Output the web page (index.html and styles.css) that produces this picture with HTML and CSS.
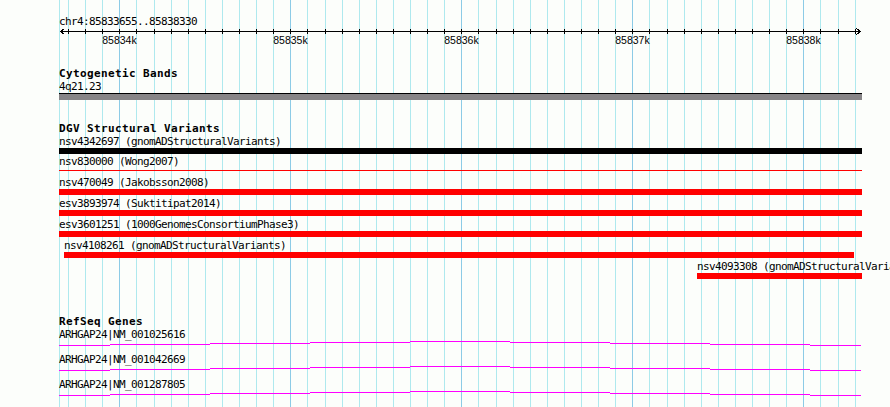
FILE: index.html
```html
<!DOCTYPE html>
<html><head><meta charset="utf-8"/>
<meta name="viewport" content="width=device-width, initial-scale=1.0"/>
<title>chr4:85833655..85838330</title>
<link rel="stylesheet" href="styles.css">
</head>
<body>

<div id="view">
<svg class="grid" width="803" height="407">
  <path class="minor" d="M0.5 0V407M9.5 0V407M26.5 0V407M43.5 0V407M77.5 0V407M95.5 0V407M112.5 0V407M129.5 0V407M146.5 0V407M163.5 0V407M180.5 0V407M197.5 0V407M214.5 0V407M248.5 0V407M266.5 0V407M283.5 0V407M300.5 0V407M317.5 0V407M334.5 0V407M351.5 0V407M368.5 0V407M385.5 0V407M419.5 0V407M437.5 0V407M454.5 0V407M471.5 0V407M488.5 0V407M505.5 0V407M522.5 0V407M539.5 0V407M556.5 0V407M590.5 0V407M608.5 0V407M625.5 0V407M642.5 0V407M659.5 0V407M676.5 0V407M693.5 0V407M710.5 0V407M727.5 0V407M761.5 0V407M779.5 0V407M796.5 0V407"/>
  <path class="major" d="M60.5 0V407M231.5 0V407M402.5 0V407M573.5 0V407M744.5 0V407"/>
</svg>

<div class="ruler">
  <div class="locus">chr4:85833655..85838330</div>
  <svg class="axis" width="803" height="20">
    <path d="M1 3.5H802M5.5 0.5L1.5 3.5L5.5 6.5M797.5 0.5L801.5 3.5L797.5 6.5"/>
    <path d="M9.5 1V6M26.5 1V6M43.5 1V6M60.5 1V6M77.5 1V6M95.5 1V6M112.5 1V6M129.5 1V6M146.5 1V6M163.5 1V6M180.5 1V6M197.5 1V6M214.5 1V6M231.5 1V6M248.5 1V6M266.5 1V6M283.5 1V6M300.5 1V6M317.5 1V6M334.5 1V6M351.5 1V6M368.5 1V6M385.5 1V6M402.5 1V6M419.5 1V6M437.5 1V6M454.5 1V6M471.5 1V6M488.5 1V6M505.5 1V6M522.5 1V6M539.5 1V6M556.5 1V6M573.5 1V6M590.5 1V6M608.5 1V6M625.5 1V6M642.5 1V6M659.5 1V6M676.5 1V6M693.5 1V6M710.5 1V6M727.5 1V6M744.5 1V6M761.5 1V6M779.5 1V6M796.5 1V6"/>
    <text x="60.5" y="16">85834k</text>
    <text x="231.5" y="16">85835k</text>
    <text x="402.5" y="16">85836k</text>
    <text x="573.5" y="16">85837k</text>
    <text x="744.5" y="16">85838k</text>
  </svg>
</div>

<div class="track cyto">
  <div class="title">Cytogenetic Bands</div>
  <div class="label">4q21.23</div>
  <div class="band"></div>
</div>

<div class="track dgv">
  <div class="title">DGV Structural Variants</div>
  <div class="feat"><div class="label">nsv4342697 (gnomADStructuralVariants)</div><div class="bar black"></div></div>
  <div class="feat"><div class="label">nsv830000 (Wong2007)</div><div class="bar thin"></div></div>
  <div class="feat"><div class="label">nsv470049 (Jakobsson2008)</div><div class="bar"></div></div>
  <div class="feat"><div class="label">esv3893974 (Suktitipat2014)</div><div class="bar"></div></div>
  <div class="feat"><div class="label">esv3601251 (1000GenomesConsortiumPhase3)</div><div class="bar"></div></div>
  <div class="feat" style="margin-left:5px"><div class="label">nsv4108261 (gnomADStructuralVariants)</div><div class="bar" style="width:790px"></div></div>
  <div class="feat" style="margin-left:638px"><div class="label">nsv4093308 (gnomADStructuralVariants)</div><div class="bar" style="width:165px"></div></div>
</div>

<div class="track refseq">
  <div class="title">RefSeq Genes</div>
  <div class="gene">
    <div class="label">ARHGAP24|NM_001025616</div>
    <svg width="803" height="5"><path d="M0 4.5h51M51 3.5h100M151 2.5h100M251 1.5h100M351 0.5h100M451 1.5h100M551 2.5h100M651 3.5h100M751 4.5h51"/></svg>
  </div>
  <div class="gene">
    <div class="label">ARHGAP24|NM_001042669</div>
    <svg width="803" height="5"><path d="M0 4.5h51M51 3.5h100M151 2.5h100M251 1.5h100M351 0.5h100M451 1.5h100M551 2.5h100M651 3.5h100M751 4.5h51"/></svg>
  </div>
  <div class="gene">
    <div class="label">ARHGAP24|NM_001287805</div>
    <svg width="803" height="5"><path d="M0 4.5h51M51 3.5h100M151 2.5h100M251 1.5h100M351 0.5h100M451 1.5h100M551 2.5h100M651 3.5h100M751 4.5h51"/></svg>
  </div>
</div>
</div>

</body>
</html>
```

FILE: styles.css
```css
html, body {
  margin: 0;
  overflow: hidden;
}
body {
  background: #fcfefb;
  color: #000;
  font-family: "DejaVu Sans Mono", "Liberation Mono", monospace;
  font-size: 11px;
  letter-spacing: -0.62px;
}
#view {
  position: relative;
  margin-left: 59px;
  width: 803px;
  height: 407px;
  padding-top: 15px;
  box-sizing: border-box;
}
.grid {
  position: absolute;
  left: 0;
  top: 0;
  shape-rendering: crispEdges;
}
.grid .minor {
  stroke: #aee9ee;
}
.grid .major {
  stroke: #8ccbe6;
}
.ruler, .track {
  position: relative;
}
.locus, .label, .title {
  height: 13px;
  line-height: 13px;
  white-space: nowrap;
}
.title {
  font-weight: bold;
  letter-spacing: 0.38px;
}
.axis {
  display: block;
  shape-rendering: crispEdges;
}
.axis path {
  stroke: #000;
  fill: none;
}
.axis text {
  font-family: "Liberation Sans", Arial, sans-serif;
  font-size: 10.5px;
  letter-spacing: 0;
  text-anchor: middle;
}
.cyto {
  margin-top: 19px;
}
.band {
  height: 6px;
  border-top: 1px solid #000;
  background: #878587;
}
.dgv {
  margin-top: 21.5px;
  height: 159.5px;
}
.feat {
  height: 20.88px;
}
.bar {
  height: 6px;
  background: #f00;
}
.bar.black {
  background: #000;
}
.bar.thin {
  height: 1px;
  margin-top: 2px;
}
.refseq {
  margin-top: 34px;
}
.gene {
  height: 25px;
}
.gene svg {
  display: block;
  shape-rendering: crispEdges;
}
.gene path {
  stroke: #f0f;
  fill: none;
}
```
